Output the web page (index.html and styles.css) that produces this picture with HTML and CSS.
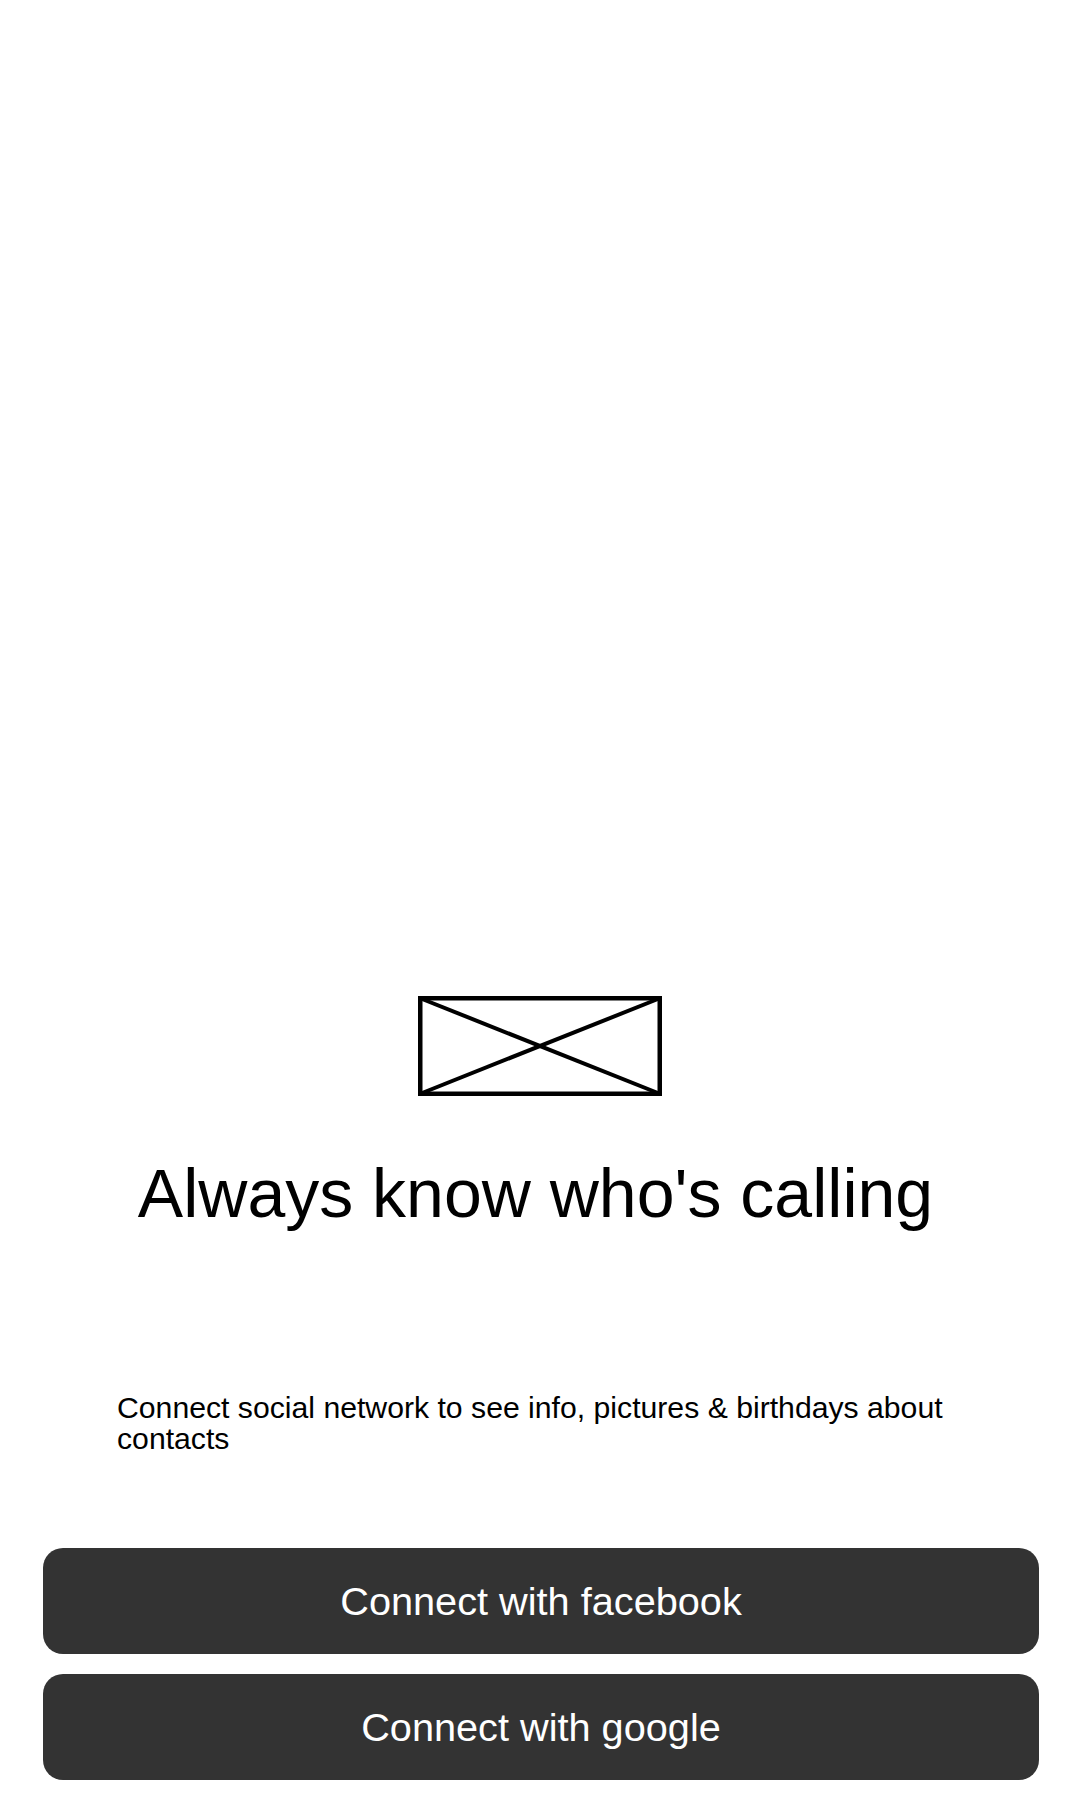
FILE: index.html
```html
<!DOCTYPE html>
<html lang="en">
<head>
<meta charset="utf-8">
<title>Always know who's calling</title>
<link rel="stylesheet" href="styles.css">
</head>
<body>
<main class="screen">
  <div class="hero-image" aria-label="image placeholder">
    <svg width="244" height="100" viewBox="0 0 244 100" xmlns="http://www.w3.org/2000/svg">
      <rect x="2.25" y="2.25" width="239.5" height="95.5" fill="none" stroke="#000" stroke-width="4.5"/>
      <line x1="2.25" y1="2.25" x2="241.75" y2="97.75" stroke="#000" stroke-width="4"/>
      <line x1="241.75" y1="2.25" x2="2.25" y2="97.75" stroke="#000" stroke-width="4"/>
    </svg>
  </div>
  <h1 class="title">Always know who's calling</h1>
  <p class="description">Connect social network to see info, pictures &amp; birthdays about contacts</p>
  <div class="actions">
    <button class="btn">Connect with facebook</button>
    <button class="btn">Connect with google</button>
  </div>
</main>
</body>
</html>
```
FILE: styles.css
```css
html, body {
  margin: 0;
  padding: 0;
  background: #ffffff;
}

body {
  font-family: "Liberation Sans", Arial, sans-serif;
  color: #000;
}

.screen {
  box-sizing: border-box;
  min-height: 1800px;
  display: flex;
  flex-direction: column;
  justify-content: flex-end;
  padding-bottom: 20px;
}

.hero-image {
  display: flex;
  justify-content: center;
}

.hero-image svg {
  display: block;
}

.title {
  margin: 58px 0 0;
  padding-right: 9px;
  font-size: 68px;
  font-weight: normal;
  line-height: 78px;
  text-align: center;
}

.description {
  margin: 160px 0 0;
  padding: 0 116px 0 117px;
  font-size: 30.2px;
  line-height: 31.5px;
}

.actions {
  margin-top: 93.5px;
  padding: 0 41px 0 43px;
  display: flex;
  flex-direction: column;
  gap: 20px;
}

.btn {
  display: block;
  width: 100%;
  height: 106px;
  border: none;
  border-radius: 20px;
  background: #333333;
  color: #ffffff;
  font-family: "Liberation Sans", Arial, sans-serif;
  font-size: 39.7px;
  padding: 0;
  text-align: center;
}
```
